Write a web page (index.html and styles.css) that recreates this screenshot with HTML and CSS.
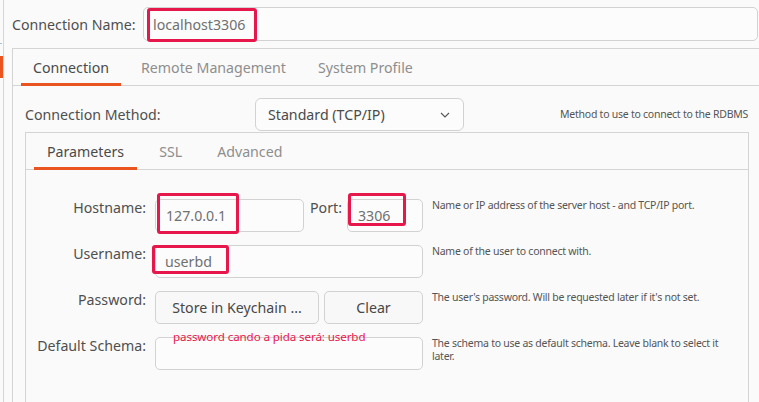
FILE: index.html
```html
<!DOCTYPE html>
<html lang="en">
<head>
<meta charset="utf-8">
<title>Connection</title>
<link rel="stylesheet" href="styles.css">
</head>
<body>
<div class="window">
  <aside class="side">
    <span class="mark-blue"></span>
    <span class="mark-orange"></span>
  </aside>
  <main class="main">
    <div class="name-row">
      <span class="name-label">Connection Name:</span>
      <div class="field name-field">
        <span class="val">localhost3306</span>
        <span class="hl hl-name"></span>
      </div>
    </div>

    <section class="frame outer">
      <nav class="tabs outer-tabs">
        <span class="tab active">Connection</span>
        <span class="tab">Remote Management</span>
        <span class="tab">System Profile</span>
      </nav>
      <div class="outer-body">
        <div class="method-row">
          <span class="label">Connection Method:</span>
          <div class="select">
            <span>Standard (TCP/IP)</span>
            <svg class="chev" width="10" height="6" viewBox="0 0 10 6"><path d="M1 1 L5 5 L9 1" fill="none" stroke="#555" stroke-width="1.1"/></svg>
          </div>
          <span class="desc method-desc">Method to use to connect to the RDBMS</span>
        </div>

        <section class="frame inner">
          <nav class="tabs inner-tabs">
            <span class="tab active">Parameters</span>
            <span class="tab">SSL</span>
            <span class="tab">Advanced</span>
          </nav>
          <div class="form">
            <span class="flabel">Hostname:</span>
            <div class="host-line">
              <div class="field host-field">
                <span class="val">127.0.0.1</span>
                <span class="hl hl-host"></span>
              </div>
              <span class="flabel port-label">Port:</span>
              <div class="field port-field">
                <span class="val">3306</span>
                <span class="hl hl-port"></span>
              </div>
            </div>
            <span class="desc">Name or IP address of the server host - and TCP/IP port.</span>

            <span class="flabel">Username:</span>
            <div class="field">
              <span class="val">userbd</span>
              <span class="hl hl-user"></span>
            </div>
            <span class="desc">Name of the user to connect with.</span>

            <span class="flabel">Password:</span>
            <div class="btn-line">
              <span class="btn btn-store">Store in Keychain ...</span>
              <span class="btn btn-clear">Clear</span>
            </div>
            <span class="desc">The user's password. Will be requested later if it's not set.</span>

            <span class="flabel">Default Schema:</span>
            <div class="field">
              <span class="note">password cando a pida será: userbd</span>
            </div>
            <span class="desc">The schema to use as default schema. Leave blank to select it later.</span>
          </div>
        </section>
      </div>
    </section>
  </main>
</div>
</body>
</html>
```

FILE: styles.css
```css
* { box-sizing: border-box; }

html, body {
  margin: 0;
  padding: 0;
  width: 759px;
  height: 402px;
  overflow: hidden;
  background: #fafafa;
  font-family: "Noto Sans", "DejaVu Sans", sans-serif;
  font-size: 14.2px;
  color: #4f4f4f;
}

.window {
  display: flex;
  height: 402px;
}

.side {
  width: 4px;
  flex: none;
  border-right: 1px solid #d6d6d6;
  display: flex;
  flex-direction: column;
  padding-top: 43px;
}

.mark-blue {
  display: block;
  width: 2px;
  height: 1px;
  background: #9cc3e6;
  margin-bottom: 12px;
}

.mark-orange {
  display: block;
  width: 3px;
  height: 22px;
  background: #e95420;
}

.main {
  flex: 1;
  min-width: 0;
  padding-left: 8px;
  padding-top: 7px;
  display: flex;
  flex-direction: column;
}

.name-row {
  display: flex;
  align-items: center;
  height: 34px;
  margin-right: 1px;
}

.name-label {
  width: 131px;
  flex: none;
  color: #4f4f4f;
}

.field {
  position: relative;
  height: 33px;
  border: 1px solid #d2d2d2;
  border-radius: 5px;
  background: #fcfcfc;
  display: flex;
  align-items: center;
  padding: 0 9px;
}

.name-field {
  flex: 1;
  height: 34px;
}

.val {
  color: #707070;
}

.hl {
  position: absolute;
  border: 3px solid #e5174b;
  border-radius: 3px;
}

.hl-name { left: 3px; top: 0; width: 110px; height: 34px; }
.hl-host { left: 1px; top: -7px; width: 82px; height: 41px; }
.hl-port { left: 0; top: -7px; width: 58px; height: 33px; }
.hl-user { left: -4px; top: -1px; width: 77px; height: 29px; }

.frame {
  border: 1px solid #d4d4d4;
}

.outer {
  margin-top: 7px;
  flex: 1;
  border-right: none;
  border-bottom: none;
  display: flex;
  flex-direction: column;
}

.tabs {
  display: flex;
  gap: 8px;
  padding-left: 8px;
  border-bottom: 1px solid #d4d4d4;
}

.tab {
  display: flex;
  align-items: center;
  padding: 1px 12px 0;
  margin-bottom: -1px;
  border-bottom: 3px solid transparent;
  color: #8e8e8e;
}

.tab.active {
  color: #4a4a4a;
  border-bottom-color: #e95420;
}

.outer-tabs { height: 37px; }
.outer-tabs .tab { height: 37px; padding-top: 2px; }

.outer-body {
  flex: 1;
  padding: 12px 10px 0 12px;
  display: flex;
  flex-direction: column;
}

.method-row {
  display: grid;
  grid-template-columns: 230px 209px 1fr;
  align-items: center;
  height: 33px;
}

.label { color: #4f4f4f; }

.select {
  height: 33px;
  border: 1px solid #d2d2d2;
  border-radius: 6px;
  background: #fcfcfc;
  display: flex;
  align-items: center;
  justify-content: space-between;
  padding: 0 13px 0 12px;
  color: #4a4a4a;
}

.chev { display: block; }

.desc {
  font-size: 10.5px;
  line-height: 13px;
  color: #555;
  letter-spacing: -0.25px;
}

.method-desc {
  text-align: right;
  padding-right: 1px;
}

.inner {
  margin-top: 1px;
  flex: 1;
  border-bottom: none;
  display: flex;
  flex-direction: column;
}

.inner-tabs { height: 37px; gap: 9px; }
.inner-tabs .tab { height: 37px; padding: 3px 13px 0; }

.form {
  display: grid;
  grid-template-columns: 120px 268px 1fr;
  column-gap: 9px;
  row-gap: 13px;
  padding: 29px 16px 0 0;
  align-items: start;
}

.flabel {
  text-align: right;
  line-height: 18px;
  color: #4f4f4f;
}

.form > .field { height: 33px; }

.host-line {
  display: flex;
  align-items: flex-start;
  height: 33px;
}

.host-field { width: 149px; padding-left: 10px; }

.port-label {
  margin-left: 6px;
  margin-right: 5px;
}

.port-field { width: 76px; padding-left: 10px; }

.btn-line {
  display: flex;
  gap: 5px;
  height: 33px;
}

.btn {
  display: flex;
  align-items: center;
  justify-content: center;
  height: 33px;
  border: 1px solid #d2d2d2;
  border-radius: 5px;
  background: #f8f8f8;
  color: #474747;
}

.btn-store { width: 164px; }
.btn-clear { flex: 1; }

.note {
  position: absolute;
  left: 17px;
  top: -8px;
  font-size: 11.6px;
  line-height: 14px;
  color: #e8174b;
  letter-spacing: -0.1px;
  white-space: nowrap;
}
```
